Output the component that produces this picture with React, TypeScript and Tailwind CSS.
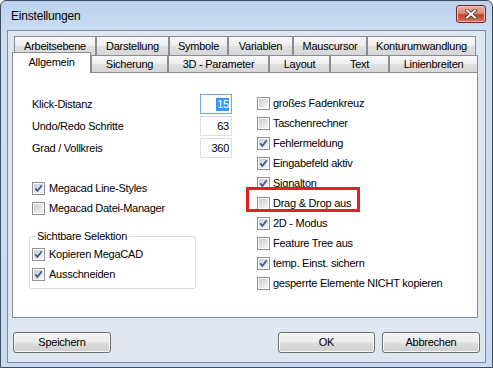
const font = "font-['Liberation_Sans',Arial,sans-serif]";

interface TabDef {
  label: string;
  w: number;
}

const topTabs: TabDef[] = [
  { label: 'Arbeitsebene', w: 82 },
  { label: 'Darstellung', w: 73 },
  { label: 'Symbole', w: 59 },
  { label: 'Variablen', w: 65 },
  { label: 'Mauscursor', w: 74 },
  { label: 'Konturumwandlung', w: 109 },
];

const frontTabs: TabDef[] = [
  { label: 'Sicherung', w: 77 },
  { label: '3D - Parameter', w: 101 },
  { label: 'Layout', w: 61 },
  { label: 'Text', w: 59 },
  { label: 'Linienbreiten', w: 89 },
];

const fields = [
  { label: 'Klick-Distanz', value: '15', focus: true },
  { label: 'Undo/Redo Schritte', value: '63' },
  { label: 'Grad / Vollkreis', value: '360' },
];

const rightOptions = [
  { label: 'großes Fadenkreuz', checked: false },
  { label: 'Taschenrechner', checked: false },
  { label: 'Fehlermeldung', checked: true },
  { label: 'Eingabefeld aktiv', checked: true },
  { label: 'Signalton', checked: true },
  { label: 'Drag & Drop aus', checked: false, marked: true },
  { label: '2D - Modus', checked: true },
  { label: 'Feature Tree aus', checked: false },
  { label: 'temp. Einst. sichern', checked: true },
  { label: 'gesperrte Elemente NICHT kopieren', checked: false },
];

const tabBg =
  'bg-[linear-gradient(#f8f8f8_0%,#eeeeee_50%,#e0e0e0_51%,#d6d6d6_100%)]';
const btnBg =
  'bg-[linear-gradient(#f3f3f3_0%,#ebebeb_48%,#dddddd_52%,#cfcfcf_100%)]';

function CheckBox({ checked }: { checked?: boolean }) {
  return (
    <span className="flex h-[13px] w-[13px] shrink-0 border border-[#8e8f8f] bg-white p-[1px]">
      <span className="flex h-full w-full items-center justify-center bg-[linear-gradient(135deg,#c9cdd3,#f6f6f6)]">
        {checked && (
          <svg width="9" height="9" viewBox="0 0 9 9">
            <path
              d="M1.3 4.4 L3.4 6.9 L7.8 1.2"
              fill="none"
              stroke="#3f5590"
              strokeWidth="1.7"
            />
          </svg>
        )}
      </span>
    </span>
  );
}

function CheckRow({
  label,
  checked,
  gap = 'gap-[4px]',
}: {
  label: string;
  checked?: boolean;
  gap?: string;
}) {
  return (
    <div className={`flex h-[20px] items-center ${gap}`}>
      <CheckBox checked={checked} />
      <span className="whitespace-nowrap">{label}</span>
    </div>
  );
}

function Button({ label, w }: { label: string; w: string }) {
  return (
    <div
      className={`flex h-[21px] ${w} items-center justify-center rounded-[3px] border border-[#707070] ${btnBg} shadow-[inset_0_0_0_1px_#fbfbfb]`}
    >
      {label}
    </div>
  );
}

export default function App() {
  return (
    <div
      className={`${font} flex h-[368px] w-[493px] flex-col rounded-t-[6px] border border-[#3d4c5f] bg-[linear-gradient(#bcd2ee,#cfdff3_40px,#c8daf0)] text-[11px] tracking-[-0.25px] text-black`}
    >
      {/* title bar */}
      <div className="flex h-[29px] shrink-0 items-start justify-between pl-[10px] pr-[6px]">
        <span className="mt-[7px] text-[12px] leading-[16px] tracking-[-0.2px]">
          Einstellungen
        </span>
        <div className="mt-[4px] flex h-[18px] w-[30px] items-center justify-center rounded-[3px] border border-[#6e2a20] bg-[linear-gradient(#eab1a4_0%,#d98a78_45%,#c4422c_55%,#d8735c_100%)] shadow-[inset_0_0_0_1px_#f0c2b6]">
          <svg width="12" height="10" viewBox="0 0 12 10">
            <path
              d="M2 1.5 L10 8.5 M10 1.5 L2 8.5"
              stroke="#5a2218"
              strokeWidth="3.6"
              strokeLinecap="square"
            />
            <path
              d="M2 1.5 L10 8.5 M10 1.5 L2 8.5"
              stroke="#ffffff"
              strokeWidth="2"
              strokeLinecap="square"
            />
          </svg>
        </div>
      </div>

      {/* client area */}
      <div className="mx-[6px] flex h-[333px] flex-col border border-[#7b8da5] bg-[#dde6f1] pt-[5px]">
        <div className="ml-[4px] flex w-[466px] flex-col">
          <div className="flex h-[19px] pl-[2px]">
            {topTabs.map((t) => (
              <div
                key={t.label}
                style={{ width: t.w }}
                className={`flex h-full items-start justify-center border border-b-0 border-[#898c95] pt-[3px] leading-[13px] ${tabBg}`}
              >
                {t.label}
              </div>
            ))}
          </div>
          <div className="relative z-10 -mt-[3px] flex h-[20px] items-end">
            <div className="-mb-px flex h-[21px] w-[79px] items-start justify-center border border-b-0 border-[#898c95] bg-white pt-[3px] leading-[13px]">
              Allgemein
            </div>
            {frontTabs.map((t) => (
              <div
                key={t.label}
                style={{ width: t.w }}
                className={`flex h-[17px] items-start justify-center border border-b-0 border-[#898c95] pt-[2px] leading-[13px] ${tabBg}`}
              >
                {t.label}
              </div>
            ))}
          </div>

          {/* panel */}
          <div className="flex h-[246px] border border-[#898c95] bg-white">
            <div className="flex w-[244px] flex-col pl-[19px] pt-[21px]">
              <div className="flex flex-col gap-[2px]">
                {fields.map((f) => (
                  <div key={f.label} className="flex h-[20px] items-center">
                    <span className="w-[168px]">{f.label}</span>
                    <span
                      className={`flex h-[20px] w-[32px] items-center justify-end border pr-[2px] ${
                        f.focus ? 'border-[#6fa6de]' : 'border-[#dde1e7]'
                      }`}
                    >
                      {f.focus ? (
                        <span className="bg-[#3399ff] pl-[1px] leading-[13px] text-white">
                          {f.value}
                        </span>
                      ) : (
                        f.value
                      )}
                    </span>
                  </div>
                ))}
              </div>

              <div className="mt-[20px] flex flex-col">
                <CheckRow label="Megacad Line-Styles" checked />
                <CheckRow label="Megacad Datei-Manager" />
              </div>

              <div className="relative -ml-[3px] mt-[18px] flex h-[53px] w-[167px] flex-col rounded-[3px] border border-[#d5dfe5] pl-[2px] pt-[7px]">
                <span className="absolute left-[5px] top-[-8px] bg-white px-[2px] leading-[14px]">
                  Sichtbare Selektion
                </span>
                <CheckRow label="Kopieren MegaCAD" checked />
                <CheckRow label="Ausschneiden" checked />
              </div>
            </div>

            <div className="flex flex-1 flex-col pt-[20px]">
              {rightOptions.map((o) => (
                <div key={o.label} className="relative">
                  <CheckRow label={o.label} checked={o.checked} gap="gap-[3px]" />
                  {o.marked && (
                    <div className="absolute left-[-11px] top-[-6px] h-[25px] w-[114px] border-[3px] border-[#e41e26]" />
                  )}
                </div>
              ))}
            </div>
          </div>
        </div>

        {/* buttons */}
        <div className="mt-[14px] flex px-[5px]">
          <Button label="Speichern" w="w-[98px]" />
          <div className="ml-auto flex gap-[7px]">
            <Button label="OK" w="w-[97px]" />
            <Button label="Abbrechen" w="w-[98px]" />
          </div>
        </div>
      </div>
    </div>
  );
}
